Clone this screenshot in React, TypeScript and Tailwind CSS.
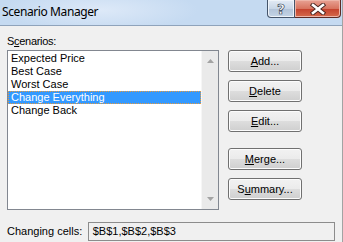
const SCENARIOS = ["Expected Price", "Best Case", "Worst Case", "Change Everything", "Change Back"];
const SELECTED = 3;

function Mnemonic({ text, at }: { text: string; at: number }) {
  return (
    <>
      {text.slice(0, at)}
      <span className="underline underline-offset-[1px]">{text[at]}</span>
      {text.slice(at + 1)}
    </>
  );
}

function DialogButton({ label, at }: { label: string; at: number }) {
  return (
    <button className="h-[22px] w-[74px] rounded-[3px] border border-[#707070] bg-[linear-gradient(#f2f2f2_0%,#ebebeb_50%,#dddddd_51%,#cfcfcf_100%)] text-[11px] leading-[13px] text-black shadow-[inset_0_0_0_1px_#fcfcfc]">
      <Mnemonic text={label} at={at} />
    </button>
  );
}

function CaptionButtons() {
  return (
    <div className="mr-[1px] flex">
      <div className="flex h-[18px] w-[28px] items-center justify-center rounded-bl-[4px] border border-t-0 border-[#44546a] bg-[linear-gradient(#e3ebf5_0%,#c8d6e6_50%,#b2c3d8_51%,#c4d4e6_100%)] shadow-[inset_0_0_0_1px_#eef3f9]">
        <span className="text-[14px] font-bold leading-none text-white [-webkit-text-stroke:0.7px_#384658] [font-family:'DejaVu_Sans',sans-serif]">?</span>
      </div>
      <div className="flex h-[18px] w-[46px] items-center justify-center rounded-br-[4px] border border-t-0 border-l-0 border-[#5e2a24] bg-[linear-gradient(#e8a294_0%,#d8745f_50%,#c4402c_51%,#d56a4c_100%)] shadow-[inset_0_0_0_1px_#eeb5a8]">
        <svg width="16" height="12" viewBox="0 0 16 12">
          <path d="M3 2 L13 10 M13 2 L3 10" stroke="#4a2520" strokeWidth="4.4" strokeLinecap="square" />
          <path d="M3 2 L13 10 M13 2 L3 10" stroke="#ffffff" strokeWidth="2.6" strokeLinecap="square" />
        </svg>
      </div>
    </div>
  );
}

export default function App() {
  return (
    <div className="flex h-[242px] w-[343px] flex-col overflow-hidden border-r border-[#a3a3a3] bg-[#f0f0f0] text-[11px] leading-[13px] text-black [font-family:'Liberation_Sans',Arial,sans-serif]">
      {/* TITLE BAR */}
      <div className="flex h-[26px] shrink-0 items-start justify-between border-b border-[#8fa3bb] bg-[radial-gradient(ellipse_140px_30px_at_100px_10px,#dde9f8,#c5daf1_70%),linear-gradient(#c3d8f0,#cfe1f4)]">
        <span className="pl-[2px] pt-[4px] text-[12px] leading-[16px] tracking-[-0.4px] [font-family:'Noto_Sans',sans-serif]">Scenario Manager</span>
        <CaptionButtons />
      </div>

      {/* BODY */}
      <div className="flex flex-1 flex-col px-[7px] pt-[9px]">
        <p className="mb-[2px] tracking-[-0.3px]">
          <Mnemonic text="Scenarios:" at={1} />
        </p>

        <div className="flex gap-[9px]">
          <div className="flex h-[160px] w-[212px] border border-[#828790] bg-white">
            <ul className="flex-1 pt-[1px]">
              {SCENARIOS.map((name, i) => (
                <li
                  key={name}
                  className={
                    i === SELECTED
                      ? "h-[13px] border border-dotted border-[#e89a3c] bg-[#3399ff] pl-[2px] leading-[11px] text-white"
                      : "h-[13px] pl-[3px]"
                  }
                >
                  {name}
                </li>
              ))}
            </ul>
            <div className="flex w-[17px] flex-col items-center justify-between border-l border-[#f6f6f6] bg-[#eaeaea] py-[8px]">
              <svg width="7" height="4" viewBox="0 0 7 4">
                <path d="M3.5 0 L7 4 L0 4 Z" fill="#a3a3a3" />
              </svg>
              <svg width="7" height="4" viewBox="0 0 7 4">
                <path d="M0 0 L7 0 L3.5 4 Z" fill="#a3a3a3" />
              </svg>
            </div>
          </div>

          <div className="flex flex-col gap-[8px]">
            <DialogButton label="Add..." at={0} />
            <DialogButton label="Delete" at={0} />
            <DialogButton label="Edit..." at={0} />
            <div className="mt-[8px] flex flex-col gap-[8px]">
              <DialogButton label="Merge..." at={0} />
              <DialogButton label="Summary..." at={1} />
            </div>
          </div>
        </div>

        <div className="mt-[12px] flex items-center">
          <span className="w-[81px]">Changing cells:</span>
          <div className="flex h-[19px] w-[248px] items-center border border-[#8c8c8c] pl-[4px]">$B$1,$B$2,$B$3</div>
        </div>
      </div>
    </div>
  );
}
